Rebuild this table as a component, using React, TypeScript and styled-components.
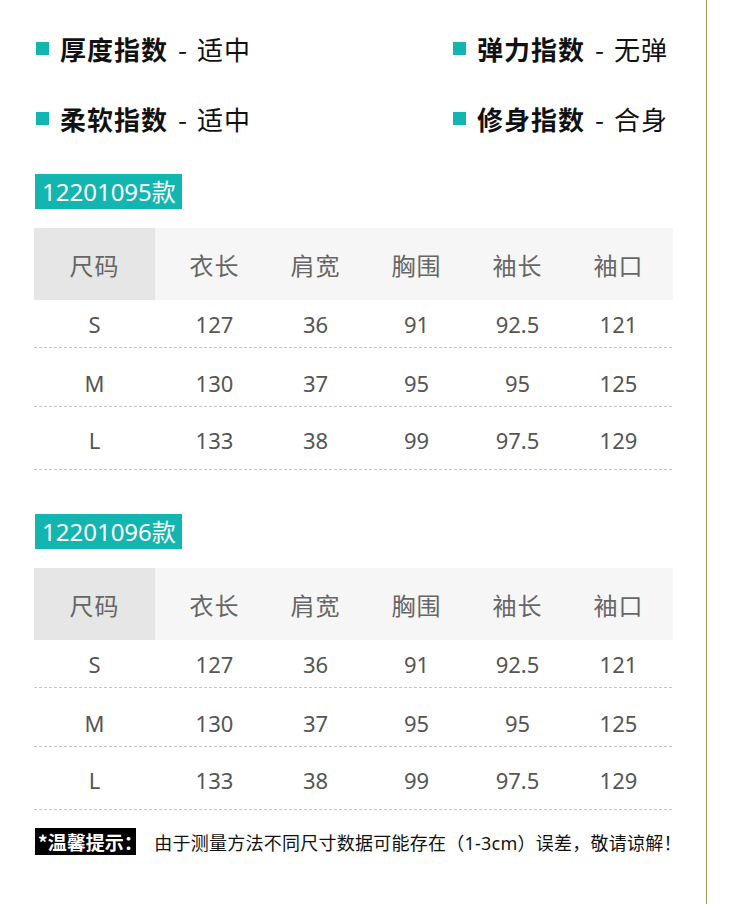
import React from "react";
import styled, { createGlobalStyle } from "styled-components";

const GlobalStyle = createGlobalStyle`
  html, body {
    margin: 0;
    padding: 0;
    background: #fff;
  }
  body {
    font-family: "Noto Sans", "Noto Sans CJK SC", sans-serif;
  }
`;

const TEAL = "#13b5b1";

const Page = styled.div`
  width: 707px;
  height: 904px;
  box-sizing: border-box;
  border-right: 1px solid #a99a4e;
  padding: 30px 0 0 34px;
`;

const Indicators = styled.div`
  display: grid;
  grid-template-columns: 417px 1fr;
  row-gap: 34px;
  padding-left: 2px;
`;

const Indicator = styled.div`
  display: flex;
  align-items: center;
  height: 36px;
  font-family: "Noto Sans CJK SC", sans-serif;
  font-size: 26px;
  letter-spacing: 1px;
  color: #111;
`;

const Square = styled.span`
  width: 13px;
  height: 13px;
  background: ${TEAL};
  margin-right: 11px;
  flex-shrink: 0;
`;

const IndicatorName = styled.span`
  font-weight: 700;
`;

const Separator = styled.span`
  margin: 0 9px 0 10px;
`;

const IndicatorValue = styled.span`
  font-weight: 400;
`;

const Section = styled.section<{ $top: number }>`
  margin-top: ${(p) => p.$top}px;
`;

const ModelBadge = styled.div`
  display: inline-block;
  margin-left: 1px;
  height: 35px;
  line-height: 35px;
  padding: 0 6px 0 7px;
  background: ${TEAL};
  color: #fff;
  font-size: 24px;
`;

const Table = styled.div`
  width: 639px;
  margin-top: 19px;
`;

const HeaderRow = styled.div`
  display: grid;
  grid-template-columns: 130px repeat(5, 101px);
  height: 72px;
  background: #f6f6f6;
  font-size: 24px;
  color: #666;
  letter-spacing: 1px;
`;

const HeaderCell = styled.div<{ $first?: boolean }>`
  display: flex;
  align-items: center;
  justify-content: center;
  ${(p) => p.$first && `background: #e6e6e6; margin-right: 9px;`}
`;

const DataRow = styled.div<{ $h: number; $pt: number }>`
  display: grid;
  grid-template-columns: 130px repeat(5, 101px);
  box-sizing: border-box;
  height: ${(p) => p.$h}px;
  padding-top: ${(p) => p.$pt}px;
  padding-bottom: 1px;
  font-size: 22px;
  color: #555;
  background: repeating-linear-gradient(90deg, #c4c4c4 0 3px, transparent 3px 5px) bottom / 100% 1px no-repeat;
`;

const DataCell = styled.div<{ $first?: boolean }>`
  display: flex;
  align-items: center;
  justify-content: center;
  line-height: 1;
  ${(p) => p.$first && `margin-right: 9px;`}
`;

const Note = styled.div`
  display: flex;
  align-items: center;
  margin-top: 18px;
  margin-left: 1px;
`;

const NoteBadge = styled.span`
  height: 27px;
  line-height: 27px;
  padding: 0 3px;
  background: #000;
  color: #fff;
  font-family: "Noto Sans CJK SC", sans-serif;
  font-size: 19px;
  font-weight: 700;
  font-feature-settings: "palt";
`;

const NoteText = styled.span`
  margin-left: 18px;
  font-size: 18px;
  letter-spacing: 0.25px;
  color: #111;
`;

const indicators = [
  { name: "厚度指数", value: "适中" },
  { name: "弹力指数", value: "无弹" },
  { name: "柔软指数", value: "适中" },
  { name: "修身指数", value: "合身" },
];

const headers = ["尺码", "衣长", "肩宽", "胸围", "袖长", "袖口"];

const sizes = [
  ["S", "127", "36", "91", "92.5", "121"],
  ["M", "130", "37", "95", "95", "125"],
  ["L", "133", "38", "99", "97.5", "129"],
];

// row heights differ a little in the original image
const rowLayout = [
  { h: 48, pt: 0 },
  { h: 59, pt: 11 },
  { h: 63, pt: 4 },
];

const models = [
  { code: "12201095款", top: 38 },
  { code: "12201096款", top: 44 },
];

function SizeTable() {
  return (
    <Table>
      <HeaderRow>
        {headers.map((h, i) => (
          <HeaderCell key={h} $first={i === 0}>
            {h}
          </HeaderCell>
        ))}
      </HeaderRow>
      {sizes.map((row, r) => (
        <DataRow key={row[0]} $h={rowLayout[r].h} $pt={rowLayout[r].pt}>
          {row.map((v, i) => (
            <DataCell key={i} $first={i === 0}>
              {v}
            </DataCell>
          ))}
        </DataRow>
      ))}
    </Table>
  );
}

export default function App() {
  return (
    <>
      <GlobalStyle />
      <Page>
        <Indicators>
          {indicators.map((it) => (
            <Indicator key={it.name}>
              <Square />
              <IndicatorName>{it.name}</IndicatorName>
              <Separator>-</Separator>
              <IndicatorValue>{it.value}</IndicatorValue>
            </Indicator>
          ))}
        </Indicators>

        {models.map((m) => (
          <Section key={m.code} $top={m.top}>
            <ModelBadge>{m.code}</ModelBadge>
            <SizeTable />
          </Section>
        ))}

        <Note>
          <NoteBadge>*温馨提示：</NoteBadge>
          <NoteText>由于测量方法不同尺寸数据可能存在（1-3cm）误差，敬请谅解！</NoteText>
        </Note>
      </Page>
    </>
  );
}
